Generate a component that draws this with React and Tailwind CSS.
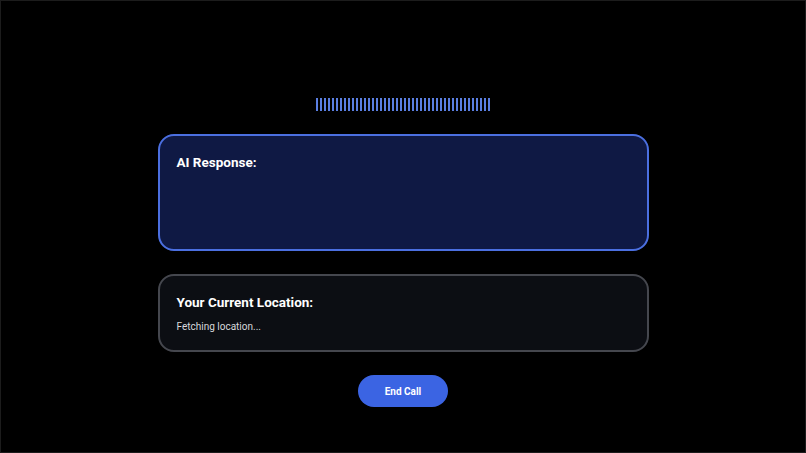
const bars = Array.from({ length: 44 });

export default function App() {
  return (
    <div
      className="w-[806px] h-[453px] bg-black border border-[#1c1c1c] flex flex-col items-center pt-[97px] gap-[23px]"
      style={{ fontFamily: "Roboto, 'Noto Sans', sans-serif" }}
    >
      <div className="flex gap-[2px] h-[13px]">
        {bars.map((_, i) => (
          <div key={i} className="w-[2px] h-full bg-[#5a7fe2]" />
        ))}
      </div>

      <div className="w-[491px] h-[117px] rounded-2xl border-2 border-[#4b6fe0] bg-[#0f1944] px-[17px] pt-[16px]">
        <h2 className="text-[13.5px] font-bold text-white leading-[20px]">AI Response:</h2>
      </div>

      <div className="w-[491px] h-[78px] rounded-2xl border-2 border-[#45474e] bg-[#0c0e13] px-[17px] pt-[16px]">
        <h2 className="text-[13.5px] font-bold text-white leading-[20px]">Your Current Location:</h2>
        <p className="mt-[8px] text-[10px] text-[#d8d8dc] leading-[14px]">Fetching location...</p>
      </div>

      <button className="w-[90px] h-[32px] rounded-full bg-[#3b64e3] text-white text-[10px] font-bold">
        End Call
      </button>
    </div>
  );
}
